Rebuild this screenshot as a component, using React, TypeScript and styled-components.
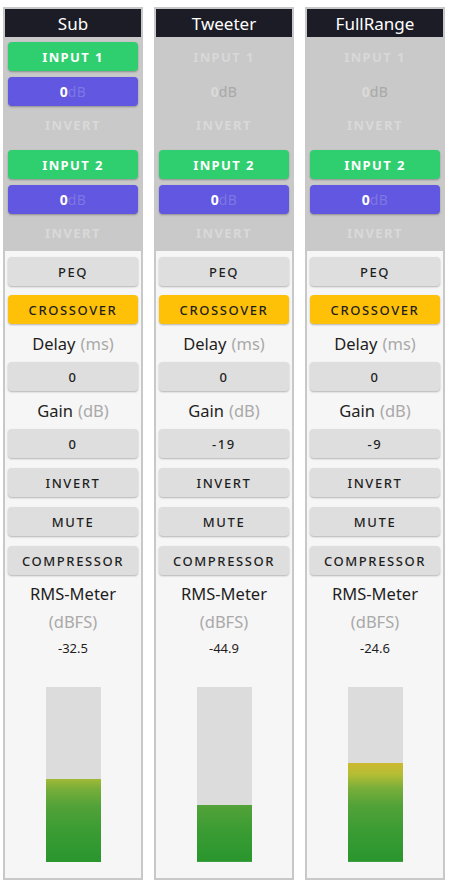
import React from 'react';
import styled, { createGlobalStyle } from 'styled-components';

type Channel = {
  name: string;
  input1: boolean;
  input2: boolean;
  delay: string;
  gain: string;
  rms: string;
  level: number; // percentage of the meter
};

const channels: Channel[] = [
  { name: 'Sub', input1: true, input2: true, delay: '0', gain: '0', rms: '-32.5', level: 47.5 },
  { name: 'Tweeter', input1: false, input2: true, delay: '0', gain: '-19', rms: '-44.9', level: 32.5 },
  { name: 'FullRange', input1: false, input2: true, delay: '0', gain: '-9', rms: '-24.6', level: 56.5 },
];

const GlobalStyle = createGlobalStyle`
  html, body {
    margin: 0;
    padding: 0;
    background: #ffffff;
    font-family: "Noto Sans", "Open Sans", sans-serif;
  }
`;

export default function App() {
  return (
    <>
      <GlobalStyle />
      <Page>
        {channels.map(ch => (
          <Column key={ch.name}>
            <Header>{ch.name}</Header>
            <InputSection>
              <InputGroup>
                <RouteButton $active={ch.input1} $tone="green">INPUT 1</RouteButton>
                <RouteButton $active={ch.input1} $tone="purple">
                  <Value $active={ch.input1}>0</Value>
                  <Unit $active={ch.input1}>dB</Unit>
                </RouteButton>
                <FadedLabel>INVERT</FadedLabel>
              </InputGroup>
              <InputGroup>
                <RouteButton $active={ch.input2} $tone="green">INPUT 2</RouteButton>
                <RouteButton $active={ch.input2} $tone="purple">
                  <Value $active={ch.input2}>0</Value>
                  <Unit $active={ch.input2}>dB</Unit>
                </RouteButton>
                <FadedLabel>INVERT</FadedLabel>
              </InputGroup>
            </InputSection>
            <Controls>
              <Button>PEQ</Button>
              <Button $variant="yellow" $gap={9}>CROSSOVER</Button>
              <FieldLabel>
                Delay <Hint>(ms)</Hint>
              </FieldLabel>
              <Button $gap={0}>{ch.delay}</Button>
              <FieldLabel>
                Gain <Hint>(dB)</Hint>
              </FieldLabel>
              <Button $gap={0}>{ch.gain}</Button>
              <Button $gap={10}>INVERT</Button>
              <Button $gap={10}>MUTE</Button>
              <Button $gap={10}>COMPRESSOR</Button>
              <MeterTitle>RMS-Meter</MeterTitle>
              <MeterUnit>(dBFS)</MeterUnit>
              <MeterValue>{ch.rms}</MeterValue>
              <Meter>
                <MeterFill style={{ height: `${ch.level}%` }} />
              </Meter>
            </Controls>
          </Column>
        ))}
      </Page>
    </>
  );
}

const Page = styled.div`
  display: flex;
  gap: 11px;
  padding: 7px 3px 2px;
`;

const Column = styled.div`
  width: 140px;
  box-sizing: border-box;
  border: 2px solid #c8c8c8;
  display: flex;
  flex-direction: column;
  background: #f7f6f6;
`;

const Header = styled.div`
  height: 28px;
  background: #1c1c26;
  color: #ffffff;
  font-size: 17px;
  font-weight: 400;
  display: flex;
  align-items: center;
  justify-content: center;
`;

const InputSection = styled.div`
  background: #c9c9c9;
  padding: 5px 3px 0;
  display: flex;
  flex-direction: column;
  gap: 12px;
  height: 214px;
  box-sizing: border-box;
`;

const InputGroup = styled.div`
  display: flex;
  flex-direction: column;
  gap: 6px;
`;

const RouteButton = styled.div<{ $active: boolean; $tone: 'green' | 'purple' }>`
  height: 29px;
  border-radius: 4px;
  display: flex;
  align-items: center;
  justify-content: center;
  font-size: 13px;
  font-weight: 700;
  letter-spacing: 1.4px;
  color: ${p => (p.$active ? '#ffffff' : '#d8d8d8')};
  background: ${p => (!p.$active ? 'transparent' : p.$tone === 'green' ? '#2fcf6f' : '#6157e0')};
  box-shadow: ${p => (p.$active ? '0 1px 2px rgba(0, 0, 0, 0.3)' : 'none')};
`;

const Value = styled.span<{ $active: boolean }>`
  font-size: 14px;
  font-weight: 700;
  letter-spacing: 0;
  color: ${p => (p.$active ? '#ffffff' : '#dadada')};
`;

const Unit = styled.span<{ $active: boolean }>`
  font-size: 14px;
  font-weight: 400;
  letter-spacing: 0.5px;
  color: ${p => (p.$active ? '#7d76e4' : '#a8a8a8')};
`;

const FadedLabel = styled.div`
  height: 26px;
  display: flex;
  align-items: center;
  justify-content: center;
  font-size: 13px;
  font-weight: 700;
  letter-spacing: 1.4px;
  color: #d9d9d9;
`;

const Controls = styled.div`
  padding: 6px 3px 16px;
  display: flex;
  flex-direction: column;
`;

const Button = styled.div<{ $variant?: 'grey' | 'yellow'; $gap?: number }>`
  height: 29px;
  margin-top: ${p => p.$gap ?? 0}px;
  border-radius: 4px;
  background: ${p => (p.$variant === 'yellow' ? '#fec107' : '#dedede')};
  color: #1e1e1e;
  box-shadow: 0 1px 2px rgba(0, 0, 0, 0.28);
  display: flex;
  align-items: center;
  justify-content: center;
  font-size: 13px;
  font-weight: 500;
  letter-spacing: 1.6px;
`;

const FieldLabel = styled.div`
  height: 38px;
  display: flex;
  align-items: center;
  justify-content: center;
  gap: 5px;
  font-size: 16.5px;
  color: #1e1e1e;
`;

const Hint = styled.span`
  color: #a9a9a9;
`;

const MeterTitle = styled.div`
  margin-top: 8px;
  line-height: 22px;
  text-align: center;
  font-size: 16.5px;
  color: #1e1e1e;
`;

const MeterUnit = styled.div`
  margin-top: 6px;
  line-height: 22px;
  text-align: center;
  font-size: 16.5px;
  color: #a9a9a9;
`;

const MeterValue = styled.div`
  margin-top: 6px;
  line-height: 18px;
  text-align: center;
  font-size: 13px;
  color: #1e1e1e;
`;

const Meter = styled.div`
  position: relative;
  align-self: center;
  margin-top: 30px;
  width: 55px;
  height: 175px;
  background: #dcdcdc;
`;

const MeterFill = styled.div`
  position: absolute;
  left: 0;
  right: 0;
  bottom: 0;
  background-image: linear-gradient(
    to top,
    #2a962e 0%,
    #3a9c33 18%,
    #52a238 32%,
    #78ae3a 42%,
    #b4be34 50%,
    #d2b82e 58%,
    #e09a28 80%,
    #e06a24 100%
  );
  background-size: 100% 175px;
  background-position: bottom;
  background-repeat: no-repeat;
`;
